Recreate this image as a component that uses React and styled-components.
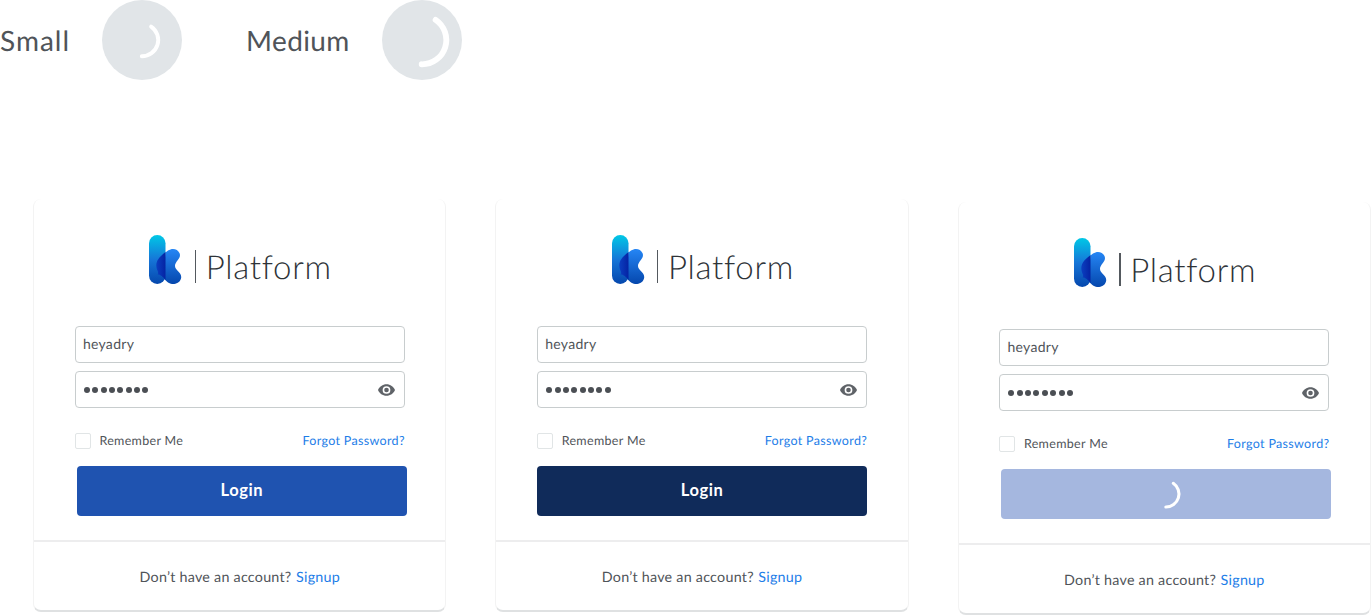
import React, { useId } from "react";
import styled, { createGlobalStyle } from "styled-components";

const GlobalStyle = createGlobalStyle`
  *, *::before, *::after { box-sizing: border-box; }
  body { margin: 0; background: #fff; overflow: hidden; font-family: Lato, "Open Sans", sans-serif; color: #505459; text-rendering: geometricPrecision; }
`;

const Page = styled.main`
  width: 1372px;
  height: 616px;
  overflow: hidden;
`;

const SizeRow = styled.section`
  display: flex;
  height: 80px;
`;

const SizeItem = styled.div`
  display: flex;
  align-items: center;
  justify-content: space-between;
  width: ${(p) => p.$width}px;
  margin-right: 64px;
`;

const SizeName = styled.span`
  padding-bottom: 1px;
  font-size: 28px;
  line-height: 34px;
  white-space: nowrap;
  letter-spacing: ${(p) => p.$track}px;
`;

const Disc = styled.div`
  display: flex;
  flex: none;
  align-items: center;
  justify-content: center;
  width: 80px;
  height: 80px;
  border-radius: 50%;
  background: #e1e5e8;
`;

const Cards = styled.section`
  display: flex;
  gap: 49.1px;
  padding: 119px 0 0 33.2px;
`;

const Card = styled.article`
  flex: none;
  width: 413.2px;
  height: 413px;
  margin-top: ${(p) => p.$drop || 0}px;
  border: 1px solid #f3f3f3;
  border-top: 0;
  border-bottom: 2px solid #dfe1e2;
  border-radius: 8px;
`;

const CardBody = styled.div`
  height: 343px;
  padding: 36px 40.7px 0;
  border-bottom: 2px solid #ededee;
`;

const Brand = styled.div`
  display: flex;
  height: 49px;
  padding-left: 74.5px;
`;

const BrandRule = styled.span`
  width: 1.3px;
  height: 33px;
  margin: 15px 9.5px 0 12.5px;
  background: #54595e;
`;

const BrandName = styled.span`
  margin-top: 12px;
  font-size: 33px;
  font-weight: 300;
  line-height: 40px;
  letter-spacing: 0.7px;
  color: #2e3338;
`;

const Field = styled.div`
  display: flex;
  align-items: center;
  justify-content: space-between;
  width: 330px;
  height: ${(p) => p.$height}px;
  margin-top: ${(p) => p.$gap}px;
  padding: 0 9px 0 7px;
  border: 1.4px solid #c8cdce;
  border-radius: 4px;
  font-size: 14px;
  letter-spacing: 0.3px;
`;

const FieldText = styled.span`
  padding-bottom: 2px;
`;

const Dots = styled.span`
  display: flex;
  gap: 2.35px;
  padding-left: 1px;
`;

const Dot = styled.i`
  width: 6px;
  height: 6px;
  border-radius: 50%;
  background: #4b4f54;
`;

const Options = styled.div`
  display: flex;
  align-items: center;
  width: 330px;
  height: 16px;
  margin-top: 25px;
  font-size: 12.5px;
  letter-spacing: 0.33px;
`;

const Checkbox = styled.span`
  width: 16px;
  height: 16px;
  margin-right: 8.5px;
  border: 1px solid #e1e5e6;
  border-radius: 2px;
`;

const OptionLabel = styled.span`
  padding-bottom: 1px;
`;

const Link = styled.a`
  color: #1d7de8;
`;

const ForgotLink = styled(Link)`
  margin-left: auto;
  padding-bottom: 1px;
`;

const Button = styled.button`
  display: flex;
  align-items: center;
  justify-content: center;
  width: 330px;
  height: 50px;
  margin: 17px 0 0 ${(p) => p.$shift}px;
  padding: 0;
  border: 0;
  border-radius: 4px;
  background: ${(p) => p.$color};
  color: #fff;
  font: 700 16.5px/20px Lato, sans-serif;
  letter-spacing: 0.6px;
`;

const ButtonLabel = styled.span`
  padding-bottom: 2px;
`;

const CardFooter = styled.footer`
  display: flex;
  align-items: center;
  justify-content: center;
  gap: 4.5px;
  height: 68px;
  padding-top: 2px;
  font-size: 14.3px;
  letter-spacing: 0.25px;
`;

const Spinner = ({ size }) => (
  <svg width={size} height={size} viewBox="0 0 40 40" fill="none">
    <path d="M29.1 6.6A16.2 16.2 0 0 1 19.8 36.2" stroke="#fff" strokeWidth="3.9" strokeLinecap="round" />
  </svg>
);

const Logo = () => {
  const id = useId();
  return (
    <svg width="33" height="49" viewBox="0 0 33 49">
      <defs>
        <linearGradient id={id + "stem"} x1="0" y1="0" x2="0" y2="1">
          <stop offset="0" stopColor="#00c8e6" />
          <stop offset=".5" stopColor="#1676d8" />
          <stop offset="1" stopColor="#0547ad" />
        </linearGradient>
        <linearGradient id={id + "arm"} x1="0" y1="0" x2="0" y2="1">
          <stop offset="0" stopColor="#2586f5" />
          <stop offset="1" stopColor="#0547ad" />
        </linearGradient>
        <linearGradient id={id + "fold"} x1="0" y1="0" x2="1" y2="0">
          <stop offset="0" stopColor="#0b3fc0" />
          <stop offset="1" stopColor="#0420a0" />
        </linearGradient>
        <clipPath id={id + "clip"}>
          <path d="M0 8.25A8.25 8.25 0 0 1 16.5 8.25V49H0Z" />
        </clipPath>
      </defs>
      <path d="M16.5 17.5L19 15.6C23.5 12.5 28.6 14 30.6 18.2C32.6 23.5 26 26 26 31C26 35.5 32.6 37 32.2 42.5C31.5 49 23 51 18.4 47L14 43Z" fill={`url(#${id}arm)`} />
      <rect width="16.5" height="49" rx="8.25" fill={`url(#${id}stem)`} />
      <path clipPath={`url(#${id}clip)`} d="M17.5 16.5C12 20.5 7.3 24.5 7.3 30.5C7.3 35 10.5 37.5 8.6 39.6C11.5 39.2 13.5 42 17.5 45.5Z" fill={`url(#${id}fold)`} />
    </svg>
  );
};

const EyeIcon = () => (
  <svg width="17" height="12" viewBox="0 0 22 15" fill="#5f6368">
    <path fillRule="evenodd" d="M11 0C6 0 1.73 3.11 0 7.5 1.73 11.89 6 15 11 15s9.27-3.11 11-7.5C20.27 3.11 16 0 11 0Zm0 12.5a5 5 0 1 1 0-10 5 5 0 0 1 0 10Zm0-8a3 3 0 1 0 0 6 3 3 0 0 0 0-6Z" />
  </svg>
);

const LoginCard = ({ color, shift = 0, drop, loading }) => (
  <Card $drop={drop}>
    <CardBody>
      <Brand>
        <Logo />
        <BrandRule />
        <BrandName>Platform</BrandName>
      </Brand>
      <Field $gap={41.5} $height={37}><FieldText>heyadry</FieldText></Field>
      <Field $gap={8.5} $height={37}>
        <Dots>{Array.from({ length: 8 }, (_, i) => <Dot key={i} />)}</Dots>
        <EyeIcon />
      </Field>
      <Options>
        <Checkbox />
        <OptionLabel>Remember Me</OptionLabel>
        <ForgotLink>Forgot Password?</ForgotLink>
      </Options>
      <Button $color={color} $shift={shift}>
        {loading ? <Spinner size={32} /> : <ButtonLabel>Login</ButtonLabel>}
      </Button>
    </CardBody>
    <CardFooter>
      <span>Don’t have an account?</span>
      <Link>Signup</Link>
    </CardFooter>
  </Card>
);

export default function App() {
  return (
    <Page>
      <GlobalStyle />
      <SizeRow>
        <SizeItem $width={182}>
          <SizeName $track={1}>Small</SizeName>
          <Disc><Spinner size={40} /></Disc>
        </SizeItem>
        <SizeItem $width={216}>
          <SizeName $track={0.4}>Medium</SizeName>
          <Disc><Spinner size={60} /></Disc>
        </SizeItem>
      </SizeRow>
      <Cards>
        <LoginCard color="#1f53b0" shift={2} />
        <LoginCard color="#102b5a" />
        <LoginCard color="#a5b7df" shift={2} drop={3} loading />
      </Cards>
    </Page>
  );
}
